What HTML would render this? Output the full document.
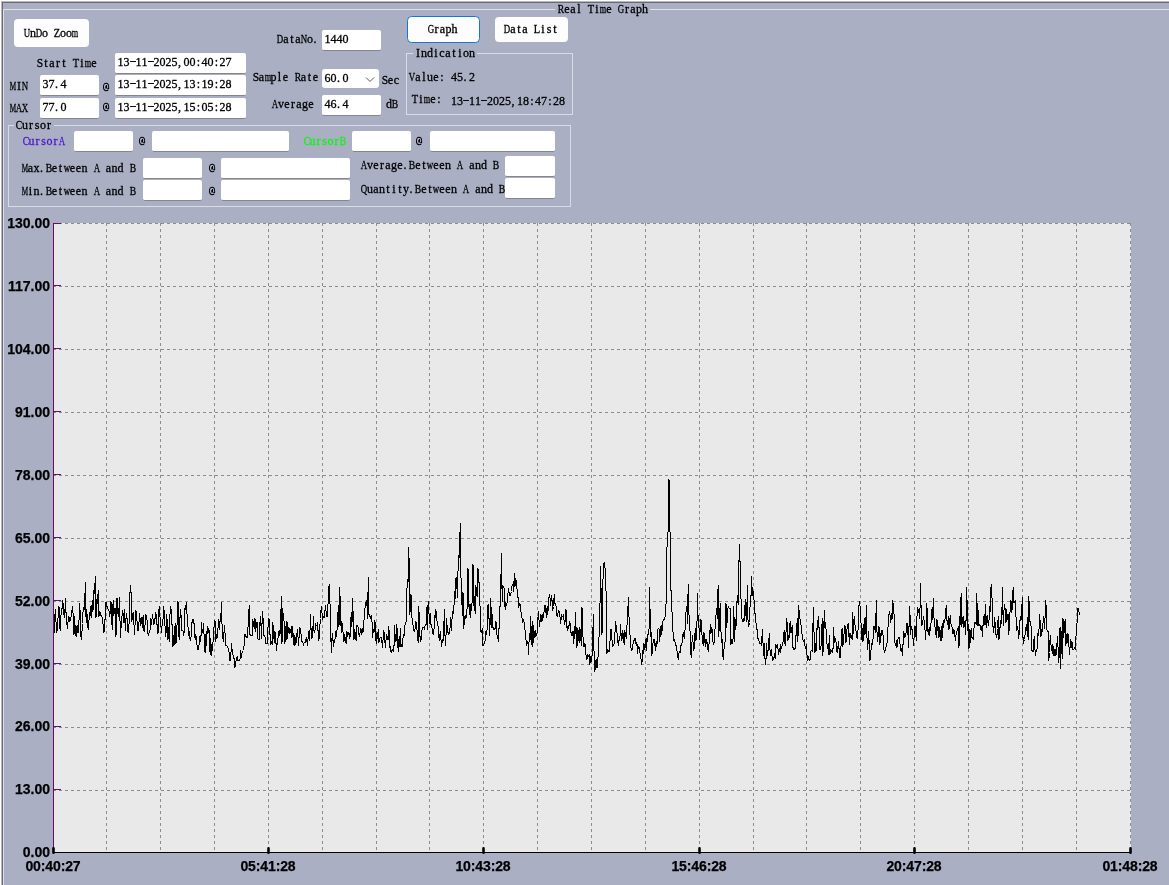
<!DOCTYPE html>
<html>
<head>
<meta charset="utf-8">
<title>Real Time Graph</title>
<style>
html,body{margin:0;padding:0;}
body{width:1169px;height:885px;overflow:hidden;background:#aaafc4;position:relative;font-family:"Liberation Serif",serif;}
#wrap{position:absolute;left:0;top:0;width:1169px;height:885px;overflow:hidden;will-change:transform;}
.abs{position:absolute;}
/* SimSun-like 12px text: Liberation Serif glyphs placed in fixed 6px cells */
.t{position:absolute;font-family:"Liberation Serif",serif;font-size:12px;line-height:12px;height:12px;color:#000;white-space:pre;-webkit-text-stroke:0.3px currentColor;}
.c{display:inline-block;width:6px;height:12px;font-weight:normal;transform-origin:0 0;white-space:pre;}
.k100{transform:translateX(0.00px)}
.k101{transform:translateX(0.34px)}
.k103{transform:translateX(0.00px)}
.k104{transform:translateX(0.00px)}
.k105{transform:translateX(1.33px)}
.k108{transform:translateX(1.33px)}
.k109{transform:translateX(-0.20px) scaleX(0.686)}
.k110{transform:translateX(0.00px)}
.k111{transform:translateX(0.00px)}
.k112{transform:translateX(0.00px)}
.k114{transform:translateX(1.00px)}
.k115{transform:translateX(0.67px)}
.k116{transform:translateX(1.33px)}
.k117{transform:translateX(0.00px)}
.k118{transform:translateX(0.00px)}
.k119{transform:translateX(-0.20px) scaleX(0.739)}
.k120{transform:translateX(0.00px)}
.k121{transform:translateX(0.00px)}
.k44{transform:translateX(0.6px)}
.k45{transform:translate(-0.50px,-0.8px) scaleX(1.75)}
.k46{transform:translateX(0.6px)}
.k48{transform:translateX(0.00px)}
.k49{transform:translateX(0.00px)}
.k50{transform:translateX(0.00px)}
.k51{transform:translateX(0.00px)}
.k52{transform:translateX(0.00px)}
.k53{transform:translateX(0.00px)}
.k54{transform:translateX(0.00px)}
.k55{transform:translateX(0.00px)}
.k56{transform:translateX(0.00px)}
.k57{transform:translateX(0.00px)}
.k58{transform:translateX(1.33px)}
.k65{transform:translateX(-0.20px) scaleX(0.739)}
.k66{transform:translateX(-0.20px) scaleX(0.800)}
.k67{transform:translateX(-0.20px) scaleX(0.800)}
.k68{transform:translateX(-0.20px) scaleX(0.739)}
.k71{transform:translateX(-0.20px) scaleX(0.739)}
.k73{transform:translateX(1.00px)}
.k76{transform:translateX(-0.20px) scaleX(0.873)}
.k77{transform:translateX(-0.20px) scaleX(0.600)}
.k78{transform:translateX(-0.20px) scaleX(0.739)}
.k81{transform:translateX(-0.20px) scaleX(0.739)}
.k82{transform:translateX(-0.20px) scaleX(0.800)}
.k83{transform:translateX(-0.20px) scaleX(0.959)}
.k84{transform:translateX(-0.20px) scaleX(0.873)}
.k85{transform:translateX(-0.20px) scaleX(0.739)}
.k86{transform:translateX(-0.20px) scaleX(0.739)}
.k88{transform:translateX(-0.20px) scaleX(0.739)}
.k90{transform:translateX(-0.20px) scaleX(0.873)}
.k97{transform:translateX(0.34px)}
.k99{transform:translateX(0.34px)}
.box{position:absolute;background:#fff;border-radius:2px;box-sizing:border-box;border-bottom:1px solid #868686;height:21px;}
.btn{position:absolute;background:#fdfdfd;border-radius:4px;box-sizing:border-box;}
.grp{position:absolute;border:1px solid #d9dce6;box-sizing:border-box;}
.gt{background:#aaafc4;}
.yl{-webkit-text-stroke:0.25px #000;position:absolute;font-family:"Liberation Sans",sans-serif;font-weight:bold;font-size:14px;line-height:14px;height:14px;color:#000;width:50px;left:0;text-align:right;white-space:pre;}
.xl{-webkit-text-stroke:0.25px #000;position:absolute;font-family:"Liberation Sans",sans-serif;font-weight:bold;font-size:14px;line-height:14px;height:14px;color:#000;width:80px;text-align:center;white-space:pre;top:859px;letter-spacing:-0.12px;}
</style>
</head>
<body>
<div id="wrap">
<div class="abs" style="left:0;top:0;width:1169px;height:1px;background:#fff"></div>
<div class="abs" style="left:0;top:0;width:1px;height:885px;background:#fff"></div>
<div class="abs" style="left:1px;top:1px;width:1168px;height:1px;background:#b9b9bc"></div>
<div class="abs" style="left:1px;top:1px;width:1px;height:884px;background:#b9b9bc"></div>
<div class="abs" style="left:2px;top:2px;width:1167px;height:1px;background:#6a6b71"></div>
<div class="abs" style="left:2px;top:2px;width:1px;height:883px;background:#6a6b71"></div>
<div class="abs" style="left:3px;top:9px;width:1166px;height:1px;background:#dfe2ea"></div>
<div class="abs" style="left:3px;top:9px;width:1px;height:876px;background:#dcdeea"></div>
<div class="abs gt" style="left:555px;top:4px;width:95px;height:10px;"></div>
<div class="t" style="left:558px;top:3px;"><b class="c k82">R</b><b class="c k101">e</b><b class="c k97">a</b><b class="c k108">l</b><b class="c"> </b><b class="c k84">T</b><b class="c k105">i</b><b class="c k109">m</b><b class="c k101">e</b><b class="c"> </b><b class="c k71">G</b><b class="c k114">r</b><b class="c k97">a</b><b class="c k112">p</b><b class="c k104">h</b></div>
<div class="btn" style="left:14px;top:19px;width:75px;height:28px;"></div>
<div class="t" style="left:24px;top:27px;"><b class="c k85">U</b><b class="c k110">n</b><b class="c k68">D</b><b class="c k111">o</b><b class="c"> </b><b class="c k90">Z</b><b class="c k111">o</b><b class="c k111">o</b><b class="c k109">m</b></div>
<div class="t" style="left:37px;top:57px;"><b class="c k83">S</b><b class="c k116">t</b><b class="c k97">a</b><b class="c k114">r</b><b class="c k116">t</b><b class="c"> </b><b class="c k84">T</b><b class="c k105">i</b><b class="c k109">m</b><b class="c k101">e</b></div>
<div class="box" style="left:115px;top:53px;width:130.5px;height:21px;"><div class="t" style="left:2.5px;top:3px;"><b class="c k49">1</b><b class="c k51">3</b><b class="c k45">-</b><b class="c k49">1</b><b class="c k49">1</b><b class="c k45">-</b><b class="c k50">2</b><b class="c k48">0</b><b class="c k50">2</b><b class="c k53">5</b><b class="c k44">,</b><b class="c k48">0</b><b class="c k48">0</b><b class="c k58">:</b><b class="c k52">4</b><b class="c k48">0</b><b class="c k58">:</b><b class="c k50">2</b><b class="c k55">7</b></div></div>
<div class="t" style="left:10px;top:80px;"><b class="c k77">M</b><b class="c k73">I</b><b class="c k78">N</b></div>
<div class="box" style="left:40px;top:75px;width:59px;height:21px;"><div class="t" style="left:2.5px;top:3px;"><b class="c k51">3</b><b class="c k55">7</b><b class="c k46">.</b><b class="c k52">4</b></div></div>
<svg class="abs" style="left:101.2px;top:80.9px" width="10" height="12" viewBox="0 0 10 12"><g transform="translate(0.55 0) scale(0.9 1)"><path d="M7.6 8.6 C6.9 9.4 6 9.7 5 9.7 C3.2 9.7 2.1 8.2 2.1 6 C2.1 3.8 3.2 2.3 5 2.3 C6.8 2.3 7.9 3.6 7.9 5.6 L7.9 7.4 L6.4 7.4" fill="none" stroke="#000" stroke-width="1.05"/><path d="M4.2 7.5 L4.2 5.6 L5.2 4.1 L6.1 4.1 L6.1 7.5 Z" fill="#000"/></g></svg><div class="t" style="left:103.2px;top:80.9px;color:transparent;-webkit-text-stroke:0">@</div>
<div class="box" style="left:115px;top:75px;width:130.5px;height:21px;"><div class="t" style="left:2.5px;top:3px;"><b class="c k49">1</b><b class="c k51">3</b><b class="c k45">-</b><b class="c k49">1</b><b class="c k49">1</b><b class="c k45">-</b><b class="c k50">2</b><b class="c k48">0</b><b class="c k50">2</b><b class="c k53">5</b><b class="c k44">,</b><b class="c k49">1</b><b class="c k51">3</b><b class="c k58">:</b><b class="c k49">1</b><b class="c k57">9</b><b class="c k58">:</b><b class="c k50">2</b><b class="c k56">8</b></div></div>
<div class="t" style="left:10px;top:102px;"><b class="c k77">M</b><b class="c k65">A</b><b class="c k88">X</b></div>
<div class="box" style="left:40px;top:98px;width:59px;height:21px;"><div class="t" style="left:2.5px;top:3px;"><b class="c k55">7</b><b class="c k55">7</b><b class="c k46">.</b><b class="c k48">0</b></div></div>
<svg class="abs" style="left:101.2px;top:100.9px" width="10" height="12" viewBox="0 0 10 12"><g transform="translate(0.55 0) scale(0.9 1)"><path d="M7.6 8.6 C6.9 9.4 6 9.7 5 9.7 C3.2 9.7 2.1 8.2 2.1 6 C2.1 3.8 3.2 2.3 5 2.3 C6.8 2.3 7.9 3.6 7.9 5.6 L7.9 7.4 L6.4 7.4" fill="none" stroke="#000" stroke-width="1.05"/><path d="M4.2 7.5 L4.2 5.6 L5.2 4.1 L6.1 4.1 L6.1 7.5 Z" fill="#000"/></g></svg><div class="t" style="left:103.2px;top:100.9px;color:transparent;-webkit-text-stroke:0">@</div>
<div class="box" style="left:115px;top:98px;width:130.5px;height:21px;"><div class="t" style="left:2.5px;top:3px;"><b class="c k49">1</b><b class="c k51">3</b><b class="c k45">-</b><b class="c k49">1</b><b class="c k49">1</b><b class="c k45">-</b><b class="c k50">2</b><b class="c k48">0</b><b class="c k50">2</b><b class="c k53">5</b><b class="c k44">,</b><b class="c k49">1</b><b class="c k53">5</b><b class="c k58">:</b><b class="c k48">0</b><b class="c k53">5</b><b class="c k58">:</b><b class="c k50">2</b><b class="c k56">8</b></div></div>
<div class="t" style="left:277px;top:33px;"><b class="c k68">D</b><b class="c k97">a</b><b class="c k116">t</b><b class="c k97">a</b><b class="c k78">N</b><b class="c k111">o</b><b class="c k46">.</b></div>
<div class="box" style="left:322px;top:30px;width:59px;height:21px;"><div class="t" style="left:2.5px;top:3px;"><b class="c k49">1</b><b class="c k52">4</b><b class="c k52">4</b><b class="c k48">0</b></div></div>
<div class="t" style="left:252.5px;top:71px;"><b class="c k83">S</b><b class="c k97">a</b><b class="c k109">m</b><b class="c k112">p</b><b class="c k108">l</b><b class="c k101">e</b><b class="c"> </b><b class="c k82">R</b><b class="c k97">a</b><b class="c k116">t</b><b class="c k101">e</b></div>
<div class="box" style="left:322px;top:68.5px;width:56.5px;height:19px;border-bottom:none;border-radius:3px"><div class="t" style="left:2.5px;top:3.5px;"><b class="c k54">6</b><b class="c k48">0</b><b class="c k46">.</b><b class="c k48">0</b></div><svg class="abs" style="left:43px;top:7px" width="10" height="7" viewBox="0 0 10 7"><path d="M1 1.5 L5 5.5 L9 1.5" fill="none" stroke="#5a5a5a" stroke-width="1"/></svg></div>
<div class="t" style="left:381.5px;top:74px;"><b class="c k83">S</b><b class="c k101">e</b><b class="c k99">c</b></div>
<div class="t" style="left:272px;top:98px;"><b class="c k65">A</b><b class="c k118">v</b><b class="c k101">e</b><b class="c k114">r</b><b class="c k97">a</b><b class="c k103">g</b><b class="c k101">e</b></div>
<div class="box" style="left:322px;top:95px;width:59px;height:21px;"><div class="t" style="left:2.5px;top:3px;"><b class="c k52">4</b><b class="c k54">6</b><b class="c k46">.</b><b class="c k52">4</b></div></div>
<div class="t" style="left:386px;top:98px;"><b class="c k100">d</b><b class="c k66">B</b></div>
<div class="btn" style="left:407px;top:16px;width:73px;height:27px;border:1.5px solid #1477d0;border-radius:4.5px;"></div>
<div class="t" style="left:427.5px;top:23px;"><b class="c k71">G</b><b class="c k114">r</b><b class="c k97">a</b><b class="c k112">p</b><b class="c k104">h</b></div>
<div class="btn" style="left:495px;top:17px;width:73px;height:25px;"></div>
<div class="t" style="left:504px;top:23px;"><b class="c k68">D</b><b class="c k97">a</b><b class="c k116">t</b><b class="c k97">a</b><b class="c"> </b><b class="c k76">L</b><b class="c k105">i</b><b class="c k115">s</b><b class="c k116">t</b></div>
<div class="grp" style="left:406px;top:53px;width:167px;height:62px;"></div>
<div class="abs gt" style="left:413px;top:48px;width:64px;height:10px;"></div>
<div class="t" style="left:415px;top:47px;"><b class="c k73">I</b><b class="c k110">n</b><b class="c k100">d</b><b class="c k105">i</b><b class="c k99">c</b><b class="c k97">a</b><b class="c k116">t</b><b class="c k105">i</b><b class="c k111">o</b><b class="c k110">n</b></div>
<div class="t" style="left:409px;top:71px;"><b class="c k86">V</b><b class="c k97">a</b><b class="c k108">l</b><b class="c k117">u</b><b class="c k101">e</b><b class="c k58">:</b></div>
<div class="t" style="left:451px;top:71px;"><b class="c k52">4</b><b class="c k53">5</b><b class="c k46">.</b><b class="c k50">2</b></div>
<div class="t" style="left:412px;top:93px;"><b class="c k84">T</b><b class="c k105">i</b><b class="c k109">m</b><b class="c k101">e</b><b class="c k58">:</b></div>
<div class="t" style="left:451px;top:94.5px;"><b class="c k49">1</b><b class="c k51">3</b><b class="c k45">-</b><b class="c k49">1</b><b class="c k49">1</b><b class="c k45">-</b><b class="c k50">2</b><b class="c k48">0</b><b class="c k50">2</b><b class="c k53">5</b><b class="c k44">,</b><b class="c k49">1</b><b class="c k56">8</b><b class="c k58">:</b><b class="c k52">4</b><b class="c k55">7</b><b class="c k58">:</b><b class="c k50">2</b><b class="c k56">8</b></div>
<div class="grp" style="left:8px;top:125px;width:563px;height:82px;"></div>
<div class="abs gt" style="left:14px;top:120px;width:40px;height:10px;"></div>
<div class="t" style="left:16px;top:119px;"><b class="c k67">C</b><b class="c k117">u</b><b class="c k114">r</b><b class="c k115">s</b><b class="c k111">o</b><b class="c k114">r</b></div>
<div class="t" style="left:22.5px;top:135px;color:#4c16cc;"><b class="c k67">C</b><b class="c k117">u</b><b class="c k114">r</b><b class="c k115">s</b><b class="c k111">o</b><b class="c k114">r</b><b class="c k65">A</b></div>
<div class="box" style="left:74px;top:131px;width:59px;height:21px;"></div>
<svg class="abs" style="left:137.1px;top:135.0px" width="10" height="12" viewBox="0 0 10 12"><g transform="translate(0.55 0) scale(0.9 1)"><path d="M7.6 8.6 C6.9 9.4 6 9.7 5 9.7 C3.2 9.7 2.1 8.2 2.1 6 C2.1 3.8 3.2 2.3 5 2.3 C6.8 2.3 7.9 3.6 7.9 5.6 L7.9 7.4 L6.4 7.4" fill="none" stroke="#000" stroke-width="1.05"/><path d="M4.2 7.5 L4.2 5.6 L5.2 4.1 L6.1 4.1 L6.1 7.5 Z" fill="#000"/></g></svg><div class="t" style="left:139.1px;top:135.0px;color:transparent;-webkit-text-stroke:0">@</div>
<div class="box" style="left:152px;top:131px;width:137px;height:21px;"></div>
<div class="t" style="left:303.5px;top:135px;color:#12f212;"><b class="c k67">C</b><b class="c k117">u</b><b class="c k114">r</b><b class="c k115">s</b><b class="c k111">o</b><b class="c k114">r</b><b class="c k66">B</b></div>
<div class="box" style="left:352px;top:131px;width:59px;height:21px;"></div>
<svg class="abs" style="left:414.2px;top:134.7px" width="10" height="12" viewBox="0 0 10 12"><g transform="translate(0.55 0) scale(0.9 1)"><path d="M7.6 8.6 C6.9 9.4 6 9.7 5 9.7 C3.2 9.7 2.1 8.2 2.1 6 C2.1 3.8 3.2 2.3 5 2.3 C6.8 2.3 7.9 3.6 7.9 5.6 L7.9 7.4 L6.4 7.4" fill="none" stroke="#000" stroke-width="1.05"/><path d="M4.2 7.5 L4.2 5.6 L5.2 4.1 L6.1 4.1 L6.1 7.5 Z" fill="#000"/></g></svg><div class="t" style="left:416.2px;top:134.7px;color:transparent;-webkit-text-stroke:0">@</div>
<div class="box" style="left:430px;top:131px;width:125px;height:21px;"></div>
<div class="t" style="left:21.5px;top:161.5px;"><b class="c k77">M</b><b class="c k97">a</b><b class="c k120">x</b><b class="c k46">.</b><b class="c k66">B</b><b class="c k101">e</b><b class="c k116">t</b><b class="c k119">w</b><b class="c k101">e</b><b class="c k101">e</b><b class="c k110">n</b><b class="c"> </b><b class="c k65">A</b><b class="c"> </b><b class="c k97">a</b><b class="c k110">n</b><b class="c k100">d</b><b class="c"> </b><b class="c k66">B</b></div>
<div class="box" style="left:143px;top:158px;width:59px;height:21px;"></div>
<svg class="abs" style="left:207.1px;top:161.7px" width="10" height="12" viewBox="0 0 10 12"><g transform="translate(0.55 0) scale(0.9 1)"><path d="M7.6 8.6 C6.9 9.4 6 9.7 5 9.7 C3.2 9.7 2.1 8.2 2.1 6 C2.1 3.8 3.2 2.3 5 2.3 C6.8 2.3 7.9 3.6 7.9 5.6 L7.9 7.4 L6.4 7.4" fill="none" stroke="#000" stroke-width="1.05"/><path d="M4.2 7.5 L4.2 5.6 L5.2 4.1 L6.1 4.1 L6.1 7.5 Z" fill="#000"/></g></svg><div class="t" style="left:209.1px;top:161.7px;color:transparent;-webkit-text-stroke:0">@</div>
<div class="box" style="left:221px;top:158px;width:129px;height:21px;"></div>
<div class="t" style="left:361px;top:158.5px;"><b class="c k65">A</b><b class="c k118">v</b><b class="c k101">e</b><b class="c k114">r</b><b class="c k97">a</b><b class="c k103">g</b><b class="c k101">e</b><b class="c k46">.</b><b class="c k66">B</b><b class="c k101">e</b><b class="c k116">t</b><b class="c k119">w</b><b class="c k101">e</b><b class="c k101">e</b><b class="c k110">n</b><b class="c"> </b><b class="c k65">A</b><b class="c"> </b><b class="c k97">a</b><b class="c k110">n</b><b class="c k100">d</b><b class="c"> </b><b class="c k66">B</b></div>
<div class="box" style="left:505px;top:156px;width:50px;height:21px;"></div>
<div class="t" style="left:21.5px;top:184.5px;"><b class="c k77">M</b><b class="c k105">i</b><b class="c k110">n</b><b class="c k46">.</b><b class="c k66">B</b><b class="c k101">e</b><b class="c k116">t</b><b class="c k119">w</b><b class="c k101">e</b><b class="c k101">e</b><b class="c k110">n</b><b class="c"> </b><b class="c k65">A</b><b class="c"> </b><b class="c k97">a</b><b class="c k110">n</b><b class="c k100">d</b><b class="c"> </b><b class="c k66">B</b></div>
<div class="box" style="left:143px;top:180px;width:59px;height:21px;"></div>
<svg class="abs" style="left:207.1px;top:184.7px" width="10" height="12" viewBox="0 0 10 12"><g transform="translate(0.55 0) scale(0.9 1)"><path d="M7.6 8.6 C6.9 9.4 6 9.7 5 9.7 C3.2 9.7 2.1 8.2 2.1 6 C2.1 3.8 3.2 2.3 5 2.3 C6.8 2.3 7.9 3.6 7.9 5.6 L7.9 7.4 L6.4 7.4" fill="none" stroke="#000" stroke-width="1.05"/><path d="M4.2 7.5 L4.2 5.6 L5.2 4.1 L6.1 4.1 L6.1 7.5 Z" fill="#000"/></g></svg><div class="t" style="left:209.1px;top:184.7px;color:transparent;-webkit-text-stroke:0">@</div>
<div class="box" style="left:221px;top:180px;width:129px;height:21px;"></div>
<div class="t" style="left:361px;top:182.5px;"><b class="c k81">Q</b><b class="c k117">u</b><b class="c k97">a</b><b class="c k110">n</b><b class="c k116">t</b><b class="c k105">i</b><b class="c k116">t</b><b class="c k121">y</b><b class="c k46">.</b><b class="c k66">B</b><b class="c k101">e</b><b class="c k116">t</b><b class="c k119">w</b><b class="c k101">e</b><b class="c k101">e</b><b class="c k110">n</b><b class="c"> </b><b class="c k65">A</b><b class="c"> </b><b class="c k97">a</b><b class="c k110">n</b><b class="c k100">d</b><b class="c"> </b><b class="c k66">B</b></div>
<div class="box" style="left:505px;top:178px;width:50px;height:21px;"></div>
<div class="abs" style="left:54px;top:223px;width:1077px;height:629px;background:#e9e9e9"></div>
<svg class="abs" style="left:0;top:0" width="1169" height="885" viewBox="0 0 1169 885" shape-rendering="crispEdges">
<path d="M53 223.5H1131M53 286.5H1131M53 349.5H1131M53 412.5H1131M53 475.5H1131M53 538.5H1131M53 601.5H1131M53 664.5H1131M53 727.5H1131M53 790.5H1131M106.5 223V852M160.5 223V852M214.5 223V852M268.5 223V852M322.5 223V852M376.5 223V852M429.5 223V852M483.5 223V852M537.5 223V852M591.5 223V852M645.5 223V852M699.5 223V852M753.5 223V852M806.5 223V852M860.5 223V852M914.5 223V852M968.5 223V852M1022.5 223V852M1076.5 223V852M1130.5 223V852" fill="none" stroke="#8c8c8c" stroke-width="1" stroke-dasharray="3 3"/>
<polyline points="54,633.5 54.7,618.5 55.4,609.5 56.1,623.5 56.9,632.5 57.6,622.5 58.3,614.5 59,606.5 59.7,627.5 60.4,630.5 61.1,612.5 61.8,611.5 62.6,600.5 63.3,604.5 64,614.5 64.7,617.5 65.4,598.5 66.1,614.5 66.8,623.5 67.5,628.5 68.3,618.5 69,616.5 69.7,621.5 70.4,619.5 71.1,616.5 71.8,611.5 72.5,606.5 73.2,615.5 74,634.5 74.7,616.5 75.4,635.5 76.1,626.5 76.8,636.5 77.5,625.5 78.2,632.5 78.9,622.5 79.7,603.5 80.4,618.5 81.1,639.5 81.8,634.5 82.5,623.5 83.2,607.5 83.9,611.5 84.6,604.5 85.4,582.5 86.1,622.5 86.8,609.5 87.5,623.5 88.2,629.5 88.9,621.5 89.6,612.5 90.3,615.5 91.1,605.5 91.8,617.5 92.5,600.5 93.2,609.5 93.9,590.5 94.6,593.5 95.3,576.5 96,617.5 96.8,599.5 97.5,603.5 98.2,590.5 98.9,616.5 99.6,611.5 100.3,612.5 101,615.5 101.7,616.5 102.5,617.5 103.2,626.5 103.9,632.5 104.6,626.5 105.3,614.5 106,602.5 106.7,606.5 107.4,606.5 108.2,609.5 108.9,610.5 109.6,616.5 110.3,611.5 111,601.5 111.7,621.5 112.4,629.5 113.1,600.5 113.9,615.5 114.6,608.5 115.3,608.5 116,636.5 116.7,598.5 117.4,598.5 118.1,616.5 118.8,611.5 119.6,597.5 120.3,637.5 121,628.5 121.7,620.5 122.4,610.5 123.1,613.5 123.8,622.5 124.5,609.5 125.3,630.5 126,618.5 126.7,613.5 127.4,624.5 128.1,632.5 128.8,629.5 129.5,612.5 130.2,585.5 131,591.5 131.7,621.5 132.4,617.5 133.1,612.5 133.8,621.5 134.5,634.5 135.2,621.5 135.9,610.5 136.7,613.5 137.4,630.5 138.1,630.5 138.8,625.5 139.5,613.5 140.2,619.5 140.9,625.5 141.6,617.5 142.4,627.5 143.1,615.5 143.8,630.5 144.5,631.5 145.2,622.5 145.9,614.5 146.6,618.5 147.3,621.5 148.1,635.5 148.8,633.5 149.5,631.5 150.2,629.5 150.9,618.5 151.6,624.5 152.3,614.5 153.1,619.5 153.8,624.5 154.5,621.5 155.2,617.5 155.9,612.5 156.6,624.5 157.3,624.5 158,633.5 158.8,609.5 159.5,606.5 160.2,620.5 160.9,625.5 161.6,632.5 162.3,621.5 163,619.5 163.7,606.5 164.5,616.5 165.2,629.5 165.9,636.5 166.6,614.5 167.3,621.5 168,639.5 168.7,627.5 169.4,641.5 170.2,606.5 170.9,607.5 171.6,617.5 172.3,629.5 173,646.5 173.7,635.5 174.4,644.5 175.1,623.5 175.9,643.5 176.6,642.5 177.3,612.5 178,601.5 178.7,634.5 179.4,639.5 180.1,614.5 180.8,609.5 181.6,630.5 182.3,630.5 183,630.5 183.7,635.5 184.4,630.5 185.1,605.5 185.8,609.5 186.5,602.5 187.3,620.5 188,626.5 188.7,635.5 189.4,631.5 190.1,640.5 190.8,640.5 191.5,628.5 192.2,619.5 193,622.5 193.7,619.5 194.4,628.5 195.1,639.5 195.8,634.5 196.5,638.5 197.2,647.5 197.9,649.5 198.7,649.5 199.4,639.5 200.1,635.5 200.8,641.5 201.5,622.5 202.2,632.5 202.9,630.5 203.6,623.5 204.4,644.5 205.1,652.5 205.8,634.5 206.5,645.5 207.2,626.5 207.9,633.5 208.6,628.5 209.3,630.5 210.1,654.5 210.8,638.5 211.5,655.5 212.2,649.5 212.9,644.5 213.6,629.5 214.3,624.5 215,620.5 215.8,641.5 216.5,634.5 217.2,637.5 217.9,629.5 218.6,619.5 219.3,629.5 220,621.5 220.7,619.5 221.5,602.5 222.2,631.5 222.9,638.5 223.6,641.5 224.3,625.5 225,632.5 225.7,645.5 226.4,645.5 227.2,646.5 227.9,647.5 228.6,650.5 229.3,653.5 230,660.5 230.7,658.5 231.4,643.5 232.1,649.5 232.9,654.5 233.6,658.5 234.3,658.5 235,667.5 235.7,662.5 236.4,658.5 237.1,656.5 237.8,660.5 238.6,660.5 239.3,660.5 240,659.5 240.7,650.5 241.4,657.5 242.1,652.5 242.8,651.5 243.5,650.5 244.3,643.5 245,634.5 245.7,636.5 246.4,636.5 247.1,637.5 247.8,631.5 248.5,618.5 249.2,605.5 250,634.5 250.7,635.5 251.4,635.5 252.1,635.5 252.8,619.5 253.5,623.5 254.2,628.5 255,618.5 255.7,631.5 256.4,623.5 257.1,622.5 257.8,638.5 258.5,639.5 259.2,639.5 259.9,623.5 260.7,616.5 261.4,638.5 262.1,621.5 262.8,611.5 263.5,634.5 264.2,636.5 264.9,635.5 265.6,643.5 266.4,643.5 267.1,643.5 267.8,631.5 268.5,618.5 269.2,619.5 269.9,632.5 270.6,644.5 271.3,641.5 272.1,644.5 272.8,622.5 273.5,630.5 274.2,642.5 274.9,631.5 275.6,633.5 276.3,650.5 277,645.5 277.8,639.5 278.5,634.5 279.2,630.5 279.9,635.5 280.6,626.5 281.3,596.5 282,643.5 282.7,608.5 283.5,619.5 284.2,621.5 284.9,643.5 285.6,633.5 286.3,621.5 287,639.5 287.7,622.5 288.4,632.5 289.2,628.5 289.9,633.5 290.6,632.5 291.3,626.5 292,637.5 292.7,626.5 293.4,641.5 294.1,645.5 294.9,635.5 295.6,644.5 296.3,641.5 297,633.5 297.7,629.5 298.4,645.5 299.1,636.5 299.8,627.5 300.6,628.5 301.3,638.5 302,641.5 302.7,641.5 303.4,645.5 304.1,642.5 304.8,642.5 305.5,642.5 306.3,637.5 307,641.5 307.7,645.5 308.4,631.5 309.1,640.5 309.8,636.5 310.5,614.5 311.2,632.5 312,638.5 312.7,633.5 313.4,616.5 314.1,632.5 314.8,632.5 315.5,623.5 316.2,625.5 316.9,625.5 317.7,622.5 318.4,640.5 319.1,638.5 319.8,626.5 320.5,618.5 321.2,606.5 321.9,611.5 322.6,619.5 323.4,616.5 324.1,617.5 324.8,611.5 325.5,605.5 326.2,612.5 326.9,616.5 327.6,616.5 328.3,595.5 329.1,584.5 329.8,599.5 330.5,613.5 331.2,652.5 331.9,638.5 332.6,633.5 333.3,646.5 334,640.5 334.8,642.5 335.5,631.5 336.2,636.5 336.9,631.5 337.6,622.5 338.3,605.5 339,626.5 339.7,587.5 340.5,608.5 341.2,632.5 341.9,621.5 342.6,631.5 343.3,632.5 344,641.5 344.7,634.5 345.4,640.5 346.2,643.5 346.9,631.5 347.6,636.5 348.3,634.5 349,632.5 349.7,638.5 350.4,634.5 351.2,612.5 351.9,626.5 352.6,598.5 353.3,619.5 354,639.5 354.7,629.5 355.4,634.5 356.1,640.5 356.9,625.5 357.6,625.5 358.3,628.5 359,634.5 359.7,636.5 360.4,628.5 361.1,629.5 361.8,634.5 362.6,628.5 363.3,631.5 364,620.5 364.7,611.5 365.4,603.5 366.1,601.5 366.8,600.5 367.5,618.5 368.3,577.5 369,614.5 369.7,616.5 370.4,616.5 371.1,619.5 371.8,615.5 372.5,637.5 373.2,629.5 374,632.5 374.7,620.5 375.4,624.5 376.1,643.5 376.8,633.5 377.5,638.5 378.2,629.5 378.9,642.5 379.7,638.5 380.4,637.5 381.1,637.5 381.8,641.5 382.5,647.5 383.2,637.5 383.9,630.5 384.6,637.5 385.4,647.5 386.1,638.5 386.8,634.5 387.5,639.5 388.2,639.5 388.9,626.5 389.6,647.5 390.3,646.5 391.1,652.5 391.8,650.5 392.5,649.5 393.2,651.5 393.9,649.5 394.6,625.5 395.3,640.5 396,641.5 396.8,624.5 397.5,637.5 398.2,651.5 398.9,639.5 399.6,646.5 400.3,628.5 401,646.5 401.7,644.5 402.5,646.5 403.2,634.5 403.9,637.5 404.6,626.5 405.3,624.5 406,622.5 406.7,595.5 407.4,579.5 408.2,581.5 408.9,547.5 409.6,614.5 410.3,610.5 411,594.5 411.7,613.5 412.4,623.5 413.1,625.5 413.9,630.5 414.6,631.5 415.3,627.5 416,621.5 416.7,627.5 417.4,632.5 418.1,642.5 418.8,606.5 419.6,629.5 420.3,641.5 421,640.5 421.7,632.5 422.4,627.5 423.1,627.5 423.8,627.5 424.5,629.5 425.3,624.5 426,625.5 426.7,607.5 427.4,629.5 428.1,601.5 428.8,609.5 429.5,623.5 430.2,613.5 431,624.5 431.7,625.5 432.4,630.5 433.1,634.5 433.8,634.5 434.5,615.5 435.2,617.5 435.9,609.5 436.7,618.5 437.4,624.5 438.1,626.5 438.8,637.5 439.5,640.5 440.2,631.5 440.9,638.5 441.6,646.5 442.4,639.5 443.1,640.5 443.8,626.5 444.5,609.5 445.2,645.5 445.9,638.5 446.6,618.5 447.4,631.5 448.1,632.5 448.8,634.5 449.5,633.5 450.2,625.5 450.9,617.5 451.6,630.5 452.3,611.5 453.1,613.5 453.8,611.5 454.5,591.5 455.2,598.5 455.9,578.5 456.6,577.5 457.3,597.5 458,571.5 458.8,555.5 459.5,557.5 460.2,523.5 460.9,575.5 461.6,590.5 462.3,615.5 463,592.5 463.7,628.5 464.5,618.5 465.2,615.5 465.9,618.5 466.6,617.5 467.3,602.5 468,568.5 468.7,606.5 469.4,604.5 470.2,617.5 470.9,604.5 471.6,610.5 472.3,597.5 473,564.5 473.7,605.5 474.4,596.5 475.1,613.5 475.9,585.5 476.6,595.5 477.3,596.5 478,568.5 478.7,578.5 479.4,587.5 480.1,608.5 480.8,631.5 481.6,632.5 482.3,628.5 483,645.5 483.7,644.5 484.4,643.5 485.1,640.5 485.8,631.5 486.5,634.5 487.3,627.5 488,605.5 488.7,604.5 489.4,635.5 490.1,623.5 490.8,598.5 491.5,627.5 492.2,614.5 493,627.5 493.7,629.5 494.4,629.5 495.1,628.5 495.8,621.5 496.5,624.5 497.2,638.5 497.9,636.5 498.7,641.5 499.4,613.5 500.1,605.5 500.8,583.5 501.5,553.5 502.2,601.5 502.9,585.5 503.6,587.5 504.4,588.5 505.1,609.5 505.8,602.5 506.5,605.5 507.2,602.5 507.9,593.5 508.6,588.5 509.3,594.5 510.1,595.5 510.8,593.5 511.5,591.5 512.2,584.5 512.9,585.5 513.6,591.5 514.3,573.5 515,586.5 515.8,578.5 516.5,582.5 517.2,591.5 517.9,595.5 518.6,607.5 519.3,604.5 520,603.5 520.7,611.5 521.5,612.5 522.2,620.5 522.9,622.5 523.6,619.5 524.3,624.5 525,629.5 525.7,635.5 526.4,645.5 527.2,643.5 527.9,641.5 528.6,654.5 529.3,633.5 530,640.5 530.7,616.5 531.4,637.5 532.1,646.5 532.9,621.5 533.6,642.5 534.3,631.5 535,637.5 535.7,630.5 536.4,635.5 537.1,632.5 537.8,619.5 538.6,611.5 539.3,626.5 540,622.5 540.7,614.5 541.4,621.5 542.1,614.5 542.8,620.5 543.5,612.5 544.3,611.5 545,605.5 545.7,608.5 546.4,617.5 547.1,606.5 547.8,614.5 548.5,602.5 549.3,594.5 550,597.5 550.7,605.5 551.4,595.5 552.1,600.5 552.8,610.5 553.5,606.5 554.2,594.5 555,603.5 555.7,604.5 556.4,608.5 557.1,616.5 557.8,614.5 558.5,610.5 559.2,611.5 559.9,615.5 560.7,623.5 561.4,614.5 562.1,616.5 562.8,616.5 563.5,614.5 564.2,622.5 564.9,624.5 565.6,609.5 566.4,611.5 567.1,630.5 567.8,626.5 568.5,628.5 569.2,624.5 569.9,621.5 570.6,628.5 571.3,635.5 572.1,631.5 572.8,633.5 573.5,643.5 574.2,626.5 574.9,638.5 575.6,612.5 576.3,647.5 577,627.5 577.8,645.5 578.5,630.5 579.2,642.5 579.9,627.5 580.6,635.5 581.3,645.5 582,607.5 582.7,630.5 583.5,646.5 584.2,646.5 584.9,643.5 585.6,649.5 586.3,658.5 587,659.5 587.7,654.5 588.4,656.5 589.2,654.5 589.9,664.5 590.6,656.5 591.3,661.5 592,656.5 592.7,637.5 593.4,614.5 594.1,656.5 594.9,671.5 595.6,660.5 596.3,659.5 597,667.5 597.7,666.5 598.4,646.5 599.1,635.5 599.8,616.5 600.6,566.5 601.3,604.5 602,634.5 602.7,590.5 603.4,565.5 604.1,562.5 604.8,566.5 605.5,571.5 606.3,602.5 607,653.5 607.7,649.5 608.4,650.5 609.1,651.5 609.8,646.5 610.5,629.5 611.2,629.5 612,639.5 612.7,646.5 613.4,645.5 614.1,643.5 614.8,636.5 615.5,621.5 616.2,626.5 616.9,631.5 617.7,641.5 618.4,645.5 619.1,639.5 619.8,640.5 620.5,624.5 621.2,635.5 621.9,640.5 622.6,630.5 623.4,635.5 624.1,644.5 624.8,630.5 625.5,634.5 626.2,638.5 626.9,626.5 627.6,618.5 628.3,597.5 629.1,619.5 629.8,630.5 630.5,645.5 631.2,649.5 631.9,650.5 632.6,648.5 633.3,640.5 634,640.5 634.8,638.5 635.5,638.5 636.2,645.5 636.9,642.5 637.6,653.5 638.3,646.5 639,647.5 639.7,651.5 640.5,655.5 641.2,660.5 641.9,664.5 642.6,650.5 643.3,653.5 644,643.5 644.7,649.5 645.5,639.5 646.2,650.5 646.9,638.5 647.6,641.5 648.3,629.5 649,630.5 649.7,587.5 650.4,636.5 651.2,632.5 651.9,655.5 652.6,645.5 653.3,640.5 654,639.5 654.7,641.5 655.4,650.5 656.1,641.5 656.9,646.5 657.6,630.5 658.3,628.5 659,628.5 659.7,641.5 660.4,630.5 661.1,625.5 661.8,634.5 662.6,621.5 663.3,620.5 664,619.5 664.7,618.5 665.4,615.5 666.1,602.5 666.8,549.5 667.5,542.5 668.3,526.5 669,479.5 669.7,523.5 670.4,543.5 671.1,597.5 671.8,604.5 672.5,629.5 673.2,632.5 674,640.5 674.7,639.5 675.4,644.5 676.1,645.5 676.8,649.5 677.5,654.5 678.2,659.5 678.9,653.5 679.7,651.5 680.4,652.5 681.1,644.5 681.8,645.5 682.5,638.5 683.2,632.5 683.9,636.5 684.6,638.5 685.4,622.5 686.1,610.5 686.8,606.5 687.5,623.5 688.2,584.5 688.9,612.5 689.6,625.5 690.3,635.5 691.1,657.5 691.8,644.5 692.5,635.5 693.2,644.5 693.9,650.5 694.6,638.5 695.3,628.5 696,640.5 696.8,633.5 697.5,593.5 698.2,623.5 698.9,625.5 699.6,639.5 700.3,626.5 701,619.5 701.7,632.5 702.5,639.5 703.2,645.5 703.9,632.5 704.6,638.5 705.3,646.5 706,639.5 706.7,643.5 707.4,642.5 708.2,651.5 708.9,645.5 709.6,637.5 710.3,624.5 711,633.5 711.7,627.5 712.4,630.5 713.1,643.5 713.9,644.5 714.6,634.5 715.3,625.5 716,615.5 716.7,608.5 717.4,618.5 718.1,585.5 718.8,636.5 719.6,615.5 720.3,603.5 721,631.5 721.7,642.5 722.4,639.5 723.1,659.5 723.8,651.5 724.5,643.5 725.3,640.5 726,603.5 726.7,627.5 727.4,617.5 728.1,606.5 728.8,607.5 729.5,608.5 730.2,608.5 731,644.5 731.7,639.5 732.4,643.5 733.1,638.5 733.8,606.5 734.5,641.5 735.2,619.5 735.9,629.5 736.7,605.5 737.4,595.5 738.1,604.5 738.8,566.5 739.5,544.5 740.2,567.5 740.9,595.5 741.7,617.5 742.4,620.5 743.1,621.5 743.8,618.5 744.5,620.5 745.2,599.5 745.9,614.5 746.6,621.5 747.4,585.5 748.1,625.5 748.8,626.5 749.5,622.5 750.2,601.5 750.9,599.5 751.6,576.5 752.3,595.5 753.1,591.5 753.8,598.5 754.5,602.5 755.2,617.5 755.9,621.5 756.6,629.5 757.3,629.5 758,638.5 758.8,640.5 759.5,643.5 760.2,643.5 760.9,643.5 761.6,645.5 762.3,629.5 763,642.5 763.7,655.5 764.5,643.5 765.2,664.5 765.9,661.5 766.6,643.5 767.3,655.5 768,651.5 768.7,642.5 769.4,633.5 770.2,654.5 770.9,655.5 771.6,649.5 772.3,660.5 773,659.5 773.7,659.5 774.4,653.5 775.1,658.5 775.9,644.5 776.6,647.5 777.3,644.5 778,648.5 778.7,654.5 779.4,648.5 780.1,652.5 780.8,644.5 781.6,648.5 782.3,644.5 783,642.5 783.7,633.5 784.4,630.5 785.1,645.5 785.8,637.5 786.5,618.5 787.3,624.5 788,640.5 788.7,635.5 789.4,637.5 790.1,621.5 790.8,632.5 791.5,632.5 792.2,625.5 793,647.5 793.7,649.5 794.4,649.5 795.1,648.5 795.8,635.5 796.5,635.5 797.2,618.5 797.9,641.5 798.7,605.5 799.4,616.5 800.1,619.5 800.8,624.5 801.5,627.5 802.2,636.5 802.9,639.5 803.6,641.5 804.4,639.5 805.1,646.5 805.8,648.5 806.5,644.5 807.2,658.5 807.9,660.5 808.6,656.5 809.3,660.5 810.1,659.5 810.8,651.5 811.5,650.5 812.2,651.5 812.9,626.5 813.6,607.5 814.3,649.5 815,652.5 815.8,643.5 816.5,650.5 817.2,620.5 817.9,629.5 818.6,616.5 819.3,635.5 820,649.5 820.7,649.5 821.5,641.5 822.2,618.5 822.9,655.5 823.6,635.5 824.3,610.5 825,627.5 825.7,622.5 826.4,637.5 827.2,645.5 827.9,648.5 828.6,654.5 829.3,635.5 830,654.5 830.7,649.5 831.4,651.5 832.1,651.5 832.9,652.5 833.6,627.5 834.3,641.5 835,642.5 835.7,638.5 836.4,646.5 837.1,652.5 837.8,647.5 838.6,641.5 839.3,653.5 840,657.5 840.7,657.5 841.4,632.5 842.1,628.5 842.8,646.5 843.6,639.5 844.3,630.5 845,625.5 845.7,642.5 846.4,641.5 847.1,627.5 847.8,624.5 848.5,623.5 849.3,644.5 850,633.5 850.7,637.5 851.4,635.5 852.1,639.5 852.8,612.5 853.5,633.5 854.2,616.5 855,624.5 855.7,629.5 856.4,633.5 857.1,638.5 857.8,635.5 858.5,616.5 859.2,601.5 859.9,603.5 860.7,619.5 861.4,627.5 862.1,641.5 862.8,628.5 863.5,640.5 864.2,618.5 864.9,634.5 865.6,630.5 866.4,605.5 867.1,642.5 867.8,649.5 868.5,631.5 869.2,642.5 869.9,660.5 870.6,655.5 871.3,645.5 872.1,642.5 872.8,644.5 873.5,626.5 874.2,629.5 874.9,626.5 875.6,632.5 876.3,600.5 877,631.5 877.8,641.5 878.5,626.5 879.2,627.5 879.9,644.5 880.6,637.5 881.3,630.5 882,635.5 882.7,630.5 883.5,641.5 884.2,652.5 884.9,651.5 885.6,647.5 886.3,646.5 887,643.5 887.7,630.5 888.4,623.5 889.2,611.5 889.9,613.5 890.6,622.5 891.3,613.5 892,619.5 892.7,600.5 893.4,605.5 894.1,615.5 894.9,642.5 895.6,645.5 896.3,640.5 897,647.5 897.7,639.5 898.4,637.5 899.1,637.5 899.8,641.5 900.6,649.5 901.3,651.5 902,648.5 902.7,655.5 903.4,631.5 904.1,633.5 904.8,637.5 905.5,634.5 906.3,631.5 907,623.5 907.7,624.5 908.4,647.5 909.1,623.5 909.8,606.5 910.5,634.5 911.2,626.5 912,629.5 912.7,633.5 913.4,645.5 914.1,636.5 914.8,626.5 915.5,626.5 916.2,640.5 916.9,617.5 917.7,607.5 918.4,612.5 919.1,608.5 919.8,618.5 920.5,583.5 921.2,612.5 921.9,625.5 922.6,624.5 923.4,616.5 924.1,620.5 924.8,625.5 925.5,639.5 926.2,627.5 926.9,603.5 927.6,631.5 928.3,629.5 929.1,635.5 929.8,627.5 930.5,630.5 931.2,620.5 931.9,609.5 932.6,619.5 933.3,598.5 934,617.5 934.8,625.5 935.5,629.5 936.2,637.5 936.9,619.5 937.6,621.5 938.3,637.5 939,626.5 939.8,635.5 940.5,640.5 941.2,626.5 941.9,640.5 942.6,623.5 943.3,627.5 944,620.5 944.7,622.5 945.5,613.5 946.2,605.5 946.9,620.5 947.6,624.5 948.3,616.5 949,629.5 949.7,620.5 950.4,615.5 951.2,626.5 951.9,625.5 952.6,633.5 953.3,633.5 954,629.5 954.7,634.5 955.4,640.5 956.1,634.5 956.9,631.5 957.6,630.5 958.3,626.5 959,647.5 959.7,616.5 960.4,624.5 961.1,593.5 961.8,626.5 962.6,618.5 963.3,616.5 964,627.5 964.7,621.5 965.4,634.5 966.1,618.5 966.8,587.5 967.5,630.5 968.3,624.5 969,648.5 969.7,629.5 970.4,642.5 971.1,628.5 971.8,637.5 972.5,637.5 973.2,639.5 974,628.5 974.7,622.5 975.4,622.5 976.1,624.5 976.8,593.5 977.5,625.5 978.2,610.5 978.9,625.5 979.7,624.5 980.4,625.5 981.1,630.5 981.8,626.5 982.5,636.5 983.2,621.5 983.9,616.5 984.6,624.5 985.4,604.5 986.1,627.5 986.8,616.5 987.5,615.5 988.2,625.5 988.9,622.5 989.6,606.5 990.3,611.5 991.1,584.5 991.8,592.5 992.5,609.5 993.2,632.5 993.9,630.5 994.6,617.5 995.3,624.5 996,634.5 996.8,637.5 997.5,628.5 998.2,616.5 998.9,639.5 999.6,637.5 1000.3,620.5 1001,624.5 1001.7,619.5 1002.5,587.5 1003.2,625.5 1003.9,611.5 1004.6,604.5 1005.3,610.5 1006,622.5 1006.7,609.5 1007.4,619.5 1008.2,614.5 1008.9,634.5 1009.6,614.5 1010.3,609.5 1011,600.5 1011.7,612.5 1012.4,607.5 1013.1,587.5 1013.9,602.5 1014.6,602.5 1015.3,600.5 1016,616.5 1016.7,630.5 1017.4,626.5 1018.1,630.5 1018.8,638.5 1019.6,624.5 1020.3,616.5 1021,620.5 1021.7,609.5 1022.4,597.5 1023.1,643.5 1023.8,641.5 1024.5,639.5 1025.3,632.5 1026,627.5 1026.7,630.5 1027.4,617.5 1028.1,639.5 1028.8,596.5 1029.5,610.5 1030.2,625.5 1031,625.5 1031.7,650.5 1032.4,650.5 1033.1,651.5 1033.8,640.5 1034.5,636.5 1035.2,655.5 1036,651.5 1036.7,650.5 1037.4,647.5 1038.1,631.5 1038.8,635.5 1039.5,614.5 1040.2,621.5 1040.9,636.5 1041.7,629.5 1042.4,631.5 1043.1,621.5 1043.8,616.5 1044.5,628.5 1045.2,614.5 1045.9,600.5 1046.6,627.5 1047.4,631.5 1048.1,631.5 1048.8,660.5 1049.5,652.5 1050.2,635.5 1050.9,644.5 1051.6,650.5 1052.3,644.5 1053.1,655.5 1053.8,646.5 1054.5,655.5 1055.2,649.5 1055.9,655.5 1056.6,653.5 1057.3,636.5 1058,646.5 1058.8,662.5 1059.5,628.5 1060.2,668.5 1060.9,627.5 1061.6,647.5 1062.3,658.5 1063,618.5 1063.7,637.5 1064.5,625.5 1065.2,619.5 1065.9,645.5 1066.6,634.5 1067.3,642.5 1068,633.5 1068.7,640.5 1069.4,654.5 1070.2,646.5 1070.9,639.5 1071.6,647.5 1072.3,642.5 1073,649.5 1073.7,649.5 1074.4,647.5 1075.1,649.5 1075.9,637.5 1076.6,627.5 1077.3,619.5 1078,608.5 1078.7,609.5 1079.4,615.5" fill="none" stroke="#000" stroke-width="1" shape-rendering="crispEdges" stroke-linejoin="bevel"/>
<path d="M53.5 223V853M53 223.5H61M53 285.5H61M53 348.5H61M53 411.5H61M53 474.5H61M53 537.5H61M53 600.5H61M53 663.5H61M53 726.5H61M53 789.5H61" fill="none" stroke="#6c0a6c" stroke-width="1"/>
<path d="M53 852.5H1131" fill="none" stroke="#000" stroke-width="1"/>
<path d="M53.5 848.3V852.7M268.5 848.3V852.7M483.5 848.3V852.7M699.5 848.3V852.7M914.5 848.3V852.7M1130.5 848.3V852.7" fill="none" stroke="#000" stroke-width="2.6" stroke-linecap="round" shape-rendering="geometricPrecision"/>
</svg>
<div class="yl" style="top:216px">130.00</div>
<div class="yl" style="top:279px">117.00</div>
<div class="yl" style="top:342px">104.00</div>
<div class="yl" style="top:405px">91.00</div>
<div class="yl" style="top:468px">78.00</div>
<div class="yl" style="top:531px">65.00</div>
<div class="yl" style="top:594px">52.00</div>
<div class="yl" style="top:657px">39.00</div>
<div class="yl" style="top:719px">26.00</div>
<div class="yl" style="top:782px">13.00</div>
<div class="yl" style="top:845px">0.00</div>
<div class="xl" style="left:13px">00:40:27</div>
<div class="xl" style="left:228px">05:41:28</div>
<div class="xl" style="left:443px">10:43:28</div>
<div class="xl" style="left:659px">15:46:28</div>
<div class="xl" style="left:874px">20:47:28</div>
<div class="xl" style="left:1090px">01:48:28</div>
</div>
</body>
</html>
